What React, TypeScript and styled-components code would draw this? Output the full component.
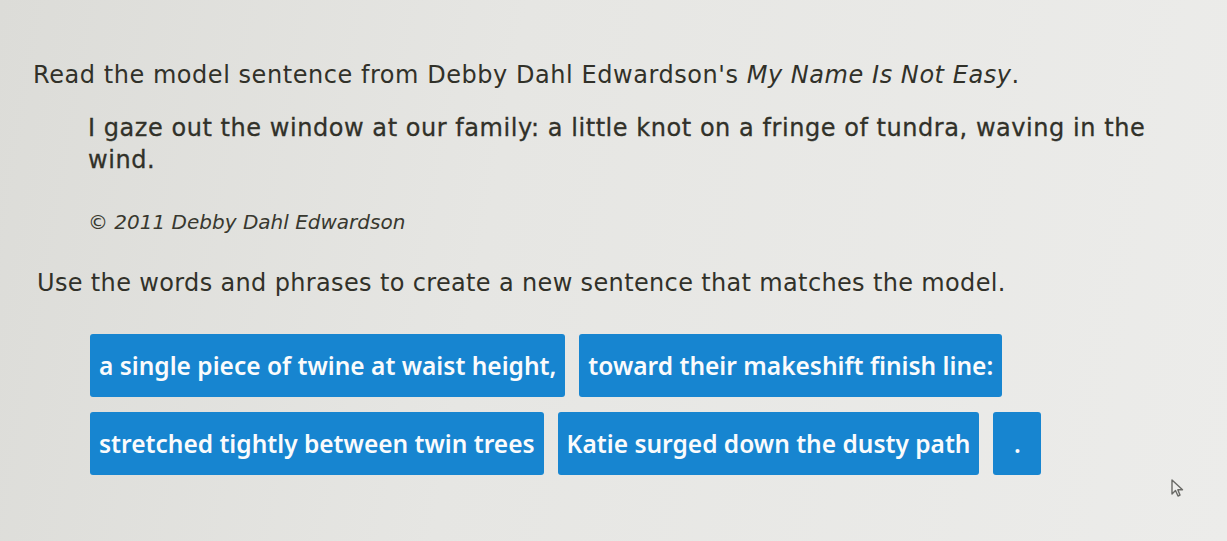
import React from 'react'
import styled, {createGlobalStyle} from 'styled-components'

const GlobalStyle = createGlobalStyle`
  html, body {
    margin: 0;
    padding: 0;
  }
  body {
    background: #e3e3e0;
    font-family: 'DejaVu Sans', Verdana, sans-serif;
  }
`

const Page = styled.div`
  position: relative;
  width: 1227px;
  height: 541px;
  overflow: hidden;
  box-sizing: border-box;
  padding: 60px 0 0 33px;
  background: linear-gradient(100deg, #dcdcd8 0%, #e6e6e3 40%, #ececea 100%);
  color: #313129;
`

const Prompt = styled.div`
  font-size: 24px;
  line-height: 30px;
  letter-spacing: 0.55px;
`

const Quote = styled.blockquote`
  margin: 22px 0 0 55px;
  width: 1080px;
  font-size: 24px;
  line-height: 32px;
  letter-spacing: 0.55px;
  -webkit-text-stroke: 0.3px #313129;
`

const Credit = styled.div`
  margin: 33px 0 0 55px;
  font-size: 20px;
  line-height: 26px;
  font-style: italic;
  color: #38382f;
`

const Instruction = styled(Prompt)`
  margin: 33px 0 0 4px;
  letter-spacing: 0.35px;
`

const Tiles = styled.div`
  margin: 36px 0 0 57px;
  display: flex;
  flex-direction: column;
  gap: 15px;
`

const TileRow = styled.div`
  display: flex;
  gap: 14px;
`

const Tile = styled.div<{$narrow?: boolean}>`
  box-sizing: border-box;
  height: 63px;
  display: flex;
  align-items: center;
  justify-content: center;
  min-width: ${p => (p.$narrow ? '48px' : 'auto')};
  padding: 0 ${p => (p.$narrow ? '0' : '9px')};
  background: #1785d0;
  border-radius: 3px;
  color: #fafbfc;
  font-family: 'Noto Sans', 'Open Sans', sans-serif;
  font-weight: 600;
  font-size: 24.5px;
`

const Pointer = styled.svg`
  position: absolute;
  left: 1170px;
  top: 478px;
`

const rows = [
  ['a single piece of twine at waist height,', 'toward their makeshift finish line:'],
  ['stretched tightly between twin trees', 'Katie surged down the dusty path', '.'],
]

const App = () => (
  <Page>
    <GlobalStyle />
    <Prompt>
      Read the model sentence from Debby Dahl Edwardson's <i>My Name Is Not Easy</i>.
    </Prompt>
    <Quote>
      I gaze out the window at our family: a little knot on a fringe of tundra, waving in the wind.
    </Quote>
    <Credit>© 2011 Debby Dahl Edwardson</Credit>
    <Instruction>Use the words and phrases to create a new sentence that matches the model.</Instruction>
    <Tiles>
      {rows.map((row, i) => (
        <TileRow key={i}>
          {row.map(text => (
            <Tile key={text} $narrow={text === '.'}>{text}</Tile>
          ))}
        </TileRow>
      ))}
    </Tiles>
    <Pointer width='16' height='22' viewBox='0 0 16 22'>
      <path
        d='M2 2 L2 16 L5.5 12.5 L8 18 L10 17 L7.8 11.8 L12.5 11.8 Z'
        fill='#eeeeec'
        stroke='#6a6a66'
        strokeWidth='1.4'
        strokeLinejoin='round'
      />
    </Pointer>
  </Page>
)

export default App
